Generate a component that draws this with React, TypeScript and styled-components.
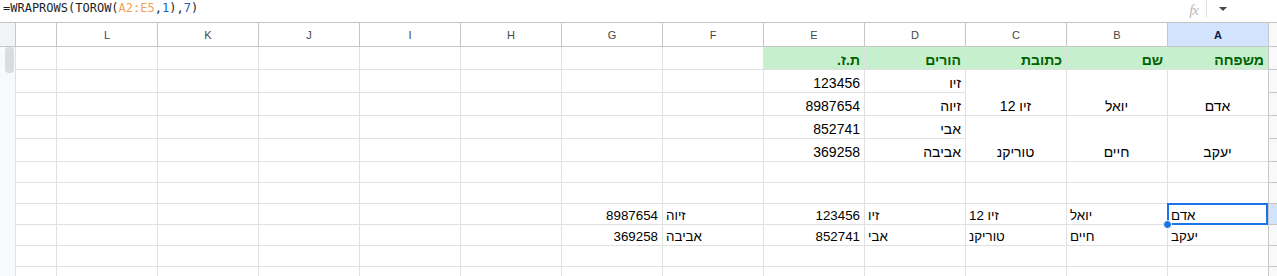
import React from 'react';
import styled, { createGlobalStyle, css } from 'styled-components';

type Align = 'left' | 'right' | 'center';
type Kind = 'head' | 'top' | 'out';

interface CellData {
  text: string;
  align: Align;
  kind: Kind;
  span?: number;
}

const COLS = ['A', 'B', 'C', 'D', 'E', 'F', 'G', 'H', 'I', 'J', 'K', 'L', 'M'];
const ROW_COUNT = 11;
const SELECTED = 'A8';

const data: Record<string, CellData> = {
  A1: { text: 'משפחה', align: 'right', kind: 'head' },
  B1: { text: 'שם', align: 'right', kind: 'head' },
  C1: { text: 'כתובת', align: 'right', kind: 'head' },
  D1: { text: 'הורים', align: 'right', kind: 'head' },
  E1: { text: 'ת.ז.', align: 'right', kind: 'head' },
  A2: { text: 'אדם', align: 'center', kind: 'top', span: 2 },
  B2: { text: 'יואל', align: 'center', kind: 'top', span: 2 },
  C2: { text: 'זיו 12', align: 'center', kind: 'top', span: 2 },
  D2: { text: 'זיו', align: 'right', kind: 'top' },
  E2: { text: '123456', align: 'right', kind: 'top' },
  D3: { text: 'זיוה', align: 'right', kind: 'top' },
  E3: { text: '8987654', align: 'right', kind: 'top' },
  A4: { text: 'יעקב', align: 'center', kind: 'top', span: 2 },
  B4: { text: 'חיים', align: 'center', kind: 'top', span: 2 },
  C4: { text: 'טוריקנ', align: 'center', kind: 'top', span: 2 },
  D4: { text: 'אבי', align: 'right', kind: 'top' },
  E4: { text: '852741', align: 'right', kind: 'top' },
  D5: { text: 'אביבה', align: 'right', kind: 'top' },
  E5: { text: '369258', align: 'right', kind: 'top' },
  A8: { text: 'אדם', align: 'left', kind: 'out' },
  B8: { text: 'יואל', align: 'left', kind: 'out' },
  C8: { text: 'זיו 12', align: 'left', kind: 'out' },
  D8: { text: 'זיו', align: 'left', kind: 'out' },
  E8: { text: '123456', align: 'right', kind: 'out' },
  F8: { text: 'זיוה', align: 'left', kind: 'out' },
  G8: { text: '8987654', align: 'right', kind: 'out' },
  A9: { text: 'יעקב', align: 'left', kind: 'out' },
  B9: { text: 'חיים', align: 'left', kind: 'out' },
  C9: { text: 'טוריקנ', align: 'left', kind: 'out' },
  D9: { text: 'אבי', align: 'left', kind: 'out' },
  E9: { text: '852741', align: 'right', kind: 'out' },
  F9: { text: 'אביבה', align: 'left', kind: 'out' },
  G9: { text: '369258', align: 'right', kind: 'out' },
};

// cells hidden under a merged range
const covered = new Set(['A3', 'B3', 'C3', 'A5', 'B5', 'C5']);

const GlobalStyle = createGlobalStyle`
  html, body {
    margin: 0;
    padding: 0;
    background: #fff;
    overflow: hidden;
  }
  body {
    font-family: "Liberation Sans", Arial, sans-serif;
  }
`;

const Page = styled.div`
  width: 1277px;
  height: 276px;
  overflow: hidden;
  display: flex;
  flex-direction: column;
  background: #fff;
`;

const FormulaBar = styled.div`
  height: 22px;
  flex: none;
  display: flex;
  align-items: flex-start;
  justify-content: space-between;
`;

const FormulaText = styled.div`
  font-family: "DejaVu Sans Mono", "Liberation Mono", monospace;
  font-size: 12px;
  line-height: 14px;
  padding: 1px 0 0 3px;
  color: #1f1f1f;
  white-space: pre;
`;

const Token = styled.span<{ $kind: 'range' | 'num' }>`
  color: ${p => (p.$kind === 'range' ? '#f4a259' : '#1a5fcf')};
`;

const Tools = styled.div`
  display: flex;
  align-items: center;
  height: 17px;
  margin-right: 50px;
`;

const Fx = styled.span`
  font-family: "Liberation Serif", serif;
  font-style: italic;
  font-size: 15px;
  line-height: 17px;
  color: #b9b9b9;
  letter-spacing: -1px;
  margin-top: 3px;
`;

const Divider = styled.span`
  width: 1px;
  height: 17px;
  background: #e0e0e0;
  margin: 0 12px 0 8px;
`;

const Caret = styled.span`
  width: 0;
  height: 0;
  border-left: 4px solid transparent;
  border-right: 4px solid transparent;
  border-top: 4px solid #444746;
  margin-top: 1px;
`;

const Body = styled.div`
  flex: 1;
  min-height: 0;
  display: flex;
`;

const Rail = styled.div`
  width: 15px;
  flex: none;
  background: #f8f9fa;
  display: flex;
  flex-direction: column;
`;

const RailCap = styled.div`
  height: 25px;
  box-sizing: border-box;
  border-top: 1px solid #c4c7c5;
  border-bottom: 1px solid #c4c7c5;
  background: #f1f3f4;
`;

const Thumb = styled.div`
  width: 9px;
  height: 26px;
  margin-left: 5px;
  border-radius: 4px;
  background: #dadce0;
`;

const Sheet = styled.div`
  flex: 1;
  display: grid;
  direction: rtl;
  grid-template-columns: 9px repeat(12, 101px) 1fr;
  grid-template-rows: 25px repeat(5, 23px) repeat(6, 21px);
  overflow: hidden;
`;

const ColHead = styled.div<{ $col: number; $active?: boolean; $corner?: boolean }>`
  grid-row: 1;
  grid-column: ${p => p.$col};
  box-sizing: border-box;
  border-top: 1px solid #c4c7c5;
  border-bottom: 1px solid #c4c7c5;
  border-left: 1px solid #c4c7c5;
  display: flex;
  align-items: center;
  justify-content: center;
  font-size: 11px;
  color: #444746;
  background: ${p => (p.$corner ? '#f8f9fa' : '#fff')};
  ${p =>
    p.$active &&
    css`
      background: #d3e3fd;
      color: #041e49;
      font-weight: 700;
    `}
`;

const RowHead = styled.div<{ $row: number; $active?: boolean }>`
  grid-row: ${p => p.$row};
  grid-column: 1;
  box-sizing: border-box;
  border-left: 1px solid #c4c7c5;
  border-bottom: 1px solid #c4c7c5;
  background: ${p => (p.$active ? '#d3e3fd' : '#f8f9fa')};
`;

const Cell = styled.div<{
  $row: number;
  $col: number;
  $span?: number;
  $align?: Align;
  $kind?: Kind;
  $selected?: boolean;
}>`
  grid-row: ${p => p.$row} / span ${p => p.$span ?? 1};
  grid-column: ${p => p.$col};
  position: relative;
  box-sizing: border-box;
  border-left: 1px solid #e1e1e1;
  border-bottom: 1px solid #e1e1e1;
  display: flex;
  flex-direction: column;
  justify-content: flex-end;
  padding: 0 4px 1px 3px;
  text-align: ${p => p.$align ?? 'right'};
  white-space: nowrap;
  font-family: "Liberation Sans", Arial, sans-serif;
  font-size: ${p => (p.$kind === 'out' ? '13.33px' : '14px')};
  color: #000;
  ${p =>
    p.$kind === 'head' &&
    css`
      background: #c6efce;
      color: #006100;
      font-weight: 700;
    `}
  ${p =>
    p.$selected &&
    css`
      &::after {
        content: '';
        position: absolute;
        top: -1px;
        bottom: -1px;
        left: -1px;
        right: 0;
        border: 2px solid #1a73e8;
        pointer-events: none;
      }
    `}
`;

const FillHandle = styled.span`
  position: absolute;
  left: -5px;
  bottom: -5px;
  width: 7px;
  height: 7px;
  border-radius: 50%;
  background: #1a73e8;
  border: 1px solid #fff;
  z-index: 2;
`;

const App = () => {
  const rows = Array.from({ length: ROW_COUNT }, (_, i) => i + 1);
  const selectedRow = Number(SELECTED.slice(1));

  return (
    <Page>
      <GlobalStyle />
      <FormulaBar>
        <FormulaText>
          =WRAPROWS(TOROW(<Token $kind="range">A2:E5</Token>,<Token $kind="num">1</Token>),<Token $kind="num">7</Token>)
        </FormulaText>
        <Tools>
          <Fx>fx</Fx>
          <Divider />
          <Caret />
        </Tools>
      </FormulaBar>
      <Body>
        <Rail>
          <RailCap />
          <Thumb />
        </Rail>
        <Sheet>
          <ColHead $col={1} $corner />
          {COLS.map((c, i) => (
            <ColHead key={c} $col={i + 2} $active={c === 'A'}>
              {c === 'M' ? '' : c}
            </ColHead>
          ))}
          {rows.map(r => (
            <React.Fragment key={r}>
              <RowHead $row={r + 1} $active={r === selectedRow} />
              {COLS.map((c, i) => {
                const key = `${c}${r}`;
                if (covered.has(key)) return null;
                const cell = data[key];
                const selected = key === SELECTED;
                return (
                  <Cell
                    key={key}
                    $row={r + 1}
                    $col={i + 2}
                    $span={cell?.span}
                    $align={cell?.align}
                    $kind={cell?.kind}
                    $selected={selected}
                  >
                    <span>{cell?.text ?? ''}</span>
                    {selected && <FillHandle />}
                  </Cell>
                );
              })}
            </React.Fragment>
          ))}
        </Sheet>
      </Body>
    </Page>
  );
};

export default App;
